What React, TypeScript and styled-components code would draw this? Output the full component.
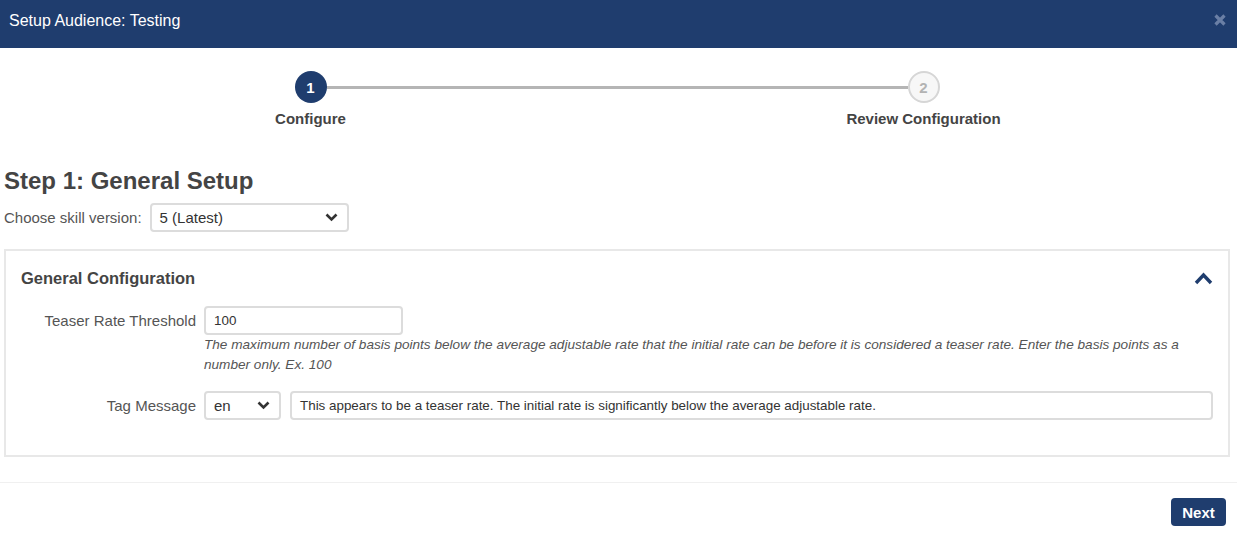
import React from 'react'
import styled, { createGlobalStyle } from 'styled-components'

const navy = '#1f3d6e'

const GlobalStyle = createGlobalStyle`
  html, body {
    margin: 0;
    padding: 0;
    background: #fff;
    font-family: "Liberation Sans", Arial, sans-serif;
    color: #555;
  }
  * {
    box-sizing: border-box;
  }
`

function ChevronDown() {
  return (
    <svg width="13" height="9" viewBox="0 0 13 9">
      <path d="M1.5 1.5 L6.5 6.5 L11.5 1.5" fill="none" stroke="#333" strokeWidth="2.6" />
    </svg>
  )
}

function ChevronUp() {
  return (
    <svg width="19" height="13" viewBox="0 0 19 13">
      <path d="M2 11 L9.5 3 L17 11" fill="none" stroke={navy} strokeWidth="3.4" />
    </svg>
  )
}

function CloseIco() {
  return (
    <svg width="12" height="12" viewBox="0 0 12 12">
      <path d="M1.5 1.5 L10.5 10.5 M10.5 1.5 L1.5 10.5" stroke="#6a7fa5" strokeWidth="3.2" />
    </svg>
  )
}

const steps = ['Configure', 'Review Configuration']

export default function App(): JSX.Element {
  return (
    <>
      <GlobalStyle />
      <StyledPage>
        <Header>
          <span>Setup Audience: Testing</span>
          <CloseButton>
            <CloseIco />
          </CloseButton>
        </Header>

        <Content>
          <Stepper>
            {steps.map((label, i) => (
              <Step key={label} $last={i === steps.length - 1}>
                <StepCircle $active={i === 0}>{i + 1}</StepCircle>
                <StepLabel>{label}</StepLabel>
              </Step>
            ))}
          </Stepper>

          <StepTitle>Step 1: General Setup</StepTitle>

          <VersionRow>
            <span>Choose skill version:</span>
            <SelectBox $width={199}>
              <span>5 (Latest)</span>
              <ChevronDown />
            </SelectBox>
          </VersionRow>

          <Panel>
            <PanelHeader>
              <span>General Configuration</span>
              <ChevronUp />
            </PanelHeader>

            <FormGrid>
              <FieldLabel>Teaser Rate Threshold</FieldLabel>
              <div>
                <TextBox $width={199}>100</TextBox>
                <HelpText>
                  The maximum number of basis points below the average adjustable rate that the initial
                  rate can be before it is considered a teaser rate. Enter the basis points as a number
                  only. Ex. 100
                </HelpText>
              </div>

              <FieldLabel>Tag Message</FieldLabel>
              <FieldRow>
                <SelectBox $width={77}>
                  <span>en</span>
                  <ChevronDown />
                </SelectBox>
                <TextBox>
                  This appears to be a teaser rate. The initial rate is significantly below the average
                  adjustable rate.
                </TextBox>
              </FieldRow>
            </FormGrid>
          </Panel>
        </Content>

        <Footer>
          <NextButton>Next</NextButton>
        </Footer>
      </StyledPage>
    </>
  )
}

const StyledPage = styled.div`
  width: 1237px;
  height: 533px;
  overflow: hidden;
  display: flex;
  flex-direction: column;
`

const Header = styled.header`
  height: 48px;
  background: ${navy};
  color: #fff;
  font-size: 16px;
  line-height: 20px;
  padding: 11px 11px 0 9px;
  display: flex;
  justify-content: space-between;
  align-items: flex-start;
`

const CloseButton = styled.span`
  display: flex;
  margin-top: 3px;
`

const Content = styled.main`
  padding: 0 7px 0 4px;
`

const Stepper = styled.div`
  display: flex;
  padding-top: 23px;
`

const Step = styled.div<{ $last: boolean }>`
  flex: 1;
  display: flex;
  flex-direction: column;
  align-items: center;
  position: relative;

  &::after {
    content: '';
    display: ${({ $last }) => ($last ? 'none' : 'block')};
    position: absolute;
    top: 15px;
    left: calc(50% + 16px);
    width: calc(100% - 32px);
    height: 3px;
    background: #b5b5b5;
  }
`

const StepCircle = styled.div<{ $active: boolean }>`
  width: 32px;
  height: 32px;
  border-radius: 50%;
  display: flex;
  align-items: center;
  justify-content: center;
  font-size: 15px;
  font-weight: bold;
  background: ${({ $active }) => ($active ? navy : '#f7f7f7')};
  color: ${({ $active }) => ($active ? '#fff' : '#b3b3b3')};
  border: ${({ $active }) => ($active ? 'none' : '2px solid #d6d6d6')};
`

const StepLabel = styled.div`
  margin-top: 6px;
  font-size: 15px;
  line-height: 20px;
  font-weight: bold;
  color: #444;
`

const StepTitle = styled.h2`
  margin: 38px 0 0;
  font-size: 24px;
  line-height: 28px;
  font-weight: bold;
  color: #444;
`

const VersionRow = styled.div`
  display: flex;
  align-items: center;
  gap: 8px;
  margin-top: 8px;
  font-size: 15px;
`

const SelectBox = styled.div<{ $width: number }>`
  width: ${({ $width }) => $width}px;
  height: 29px;
  flex: none;
  border: 2px solid #dcdcdc;
  border-radius: 4px;
  display: flex;
  align-items: center;
  justify-content: space-between;
  padding: 0 9px 0 8px;
  font-size: 15px;
  color: #333;
`

const Panel = styled.section`
  margin-top: 17px;
  border: 2px solid #e8e8e8;
  padding: 0 15px 34px 0;
`

const PanelHeader = styled.div`
  display: flex;
  justify-content: space-between;
  align-items: center;
  padding: 17px 0 0 15px;
  font-size: 16.5px;
  line-height: 20px;
  font-weight: bold;
  color: #444;
`

const FormGrid = styled.div`
  display: grid;
  grid-template-columns: 190px 1fr;
  column-gap: 8px;
  row-gap: 16px;
  margin-top: 18px;
`

const FieldLabel = styled.label`
  text-align: right;
  line-height: 30px;
  font-size: 15px;
  color: #555;
`

const FieldRow = styled.div`
  display: flex;
  gap: 9px;
`

const TextBox = styled.div<{ $width?: number }>`
  width: ${({ $width }) => ($width ? `${$width}px` : 'auto')};
  flex: 1;
  max-width: ${({ $width }) => ($width ? `${$width}px` : 'none')};
  height: 29px;
  border: 2px solid #dcdcdc;
  border-radius: 4px;
  padding: 0 8px;
  display: flex;
  align-items: center;
  font-size: 13.4px;
  color: #333;
  white-space: nowrap;
  overflow: hidden;
`

const HelpText = styled.div`
  font-size: 13.6px;
  line-height: 20px;
  font-style: italic;
  color: #555;
`

const Footer = styled.footer`
  margin-top: 25px;
  border-top: 1px solid #f0f0f0;
  padding: 15px 11px 0 0;
  display: flex;
  justify-content: flex-end;
`

const NextButton = styled.button`
  height: 28px;
  width: 55px;
  border: none;
  border-radius: 4px;
  background: ${navy};
  color: #fff;
  font-family: inherit;
  font-size: 15px;
  font-weight: bold;
  padding: 0;
`
